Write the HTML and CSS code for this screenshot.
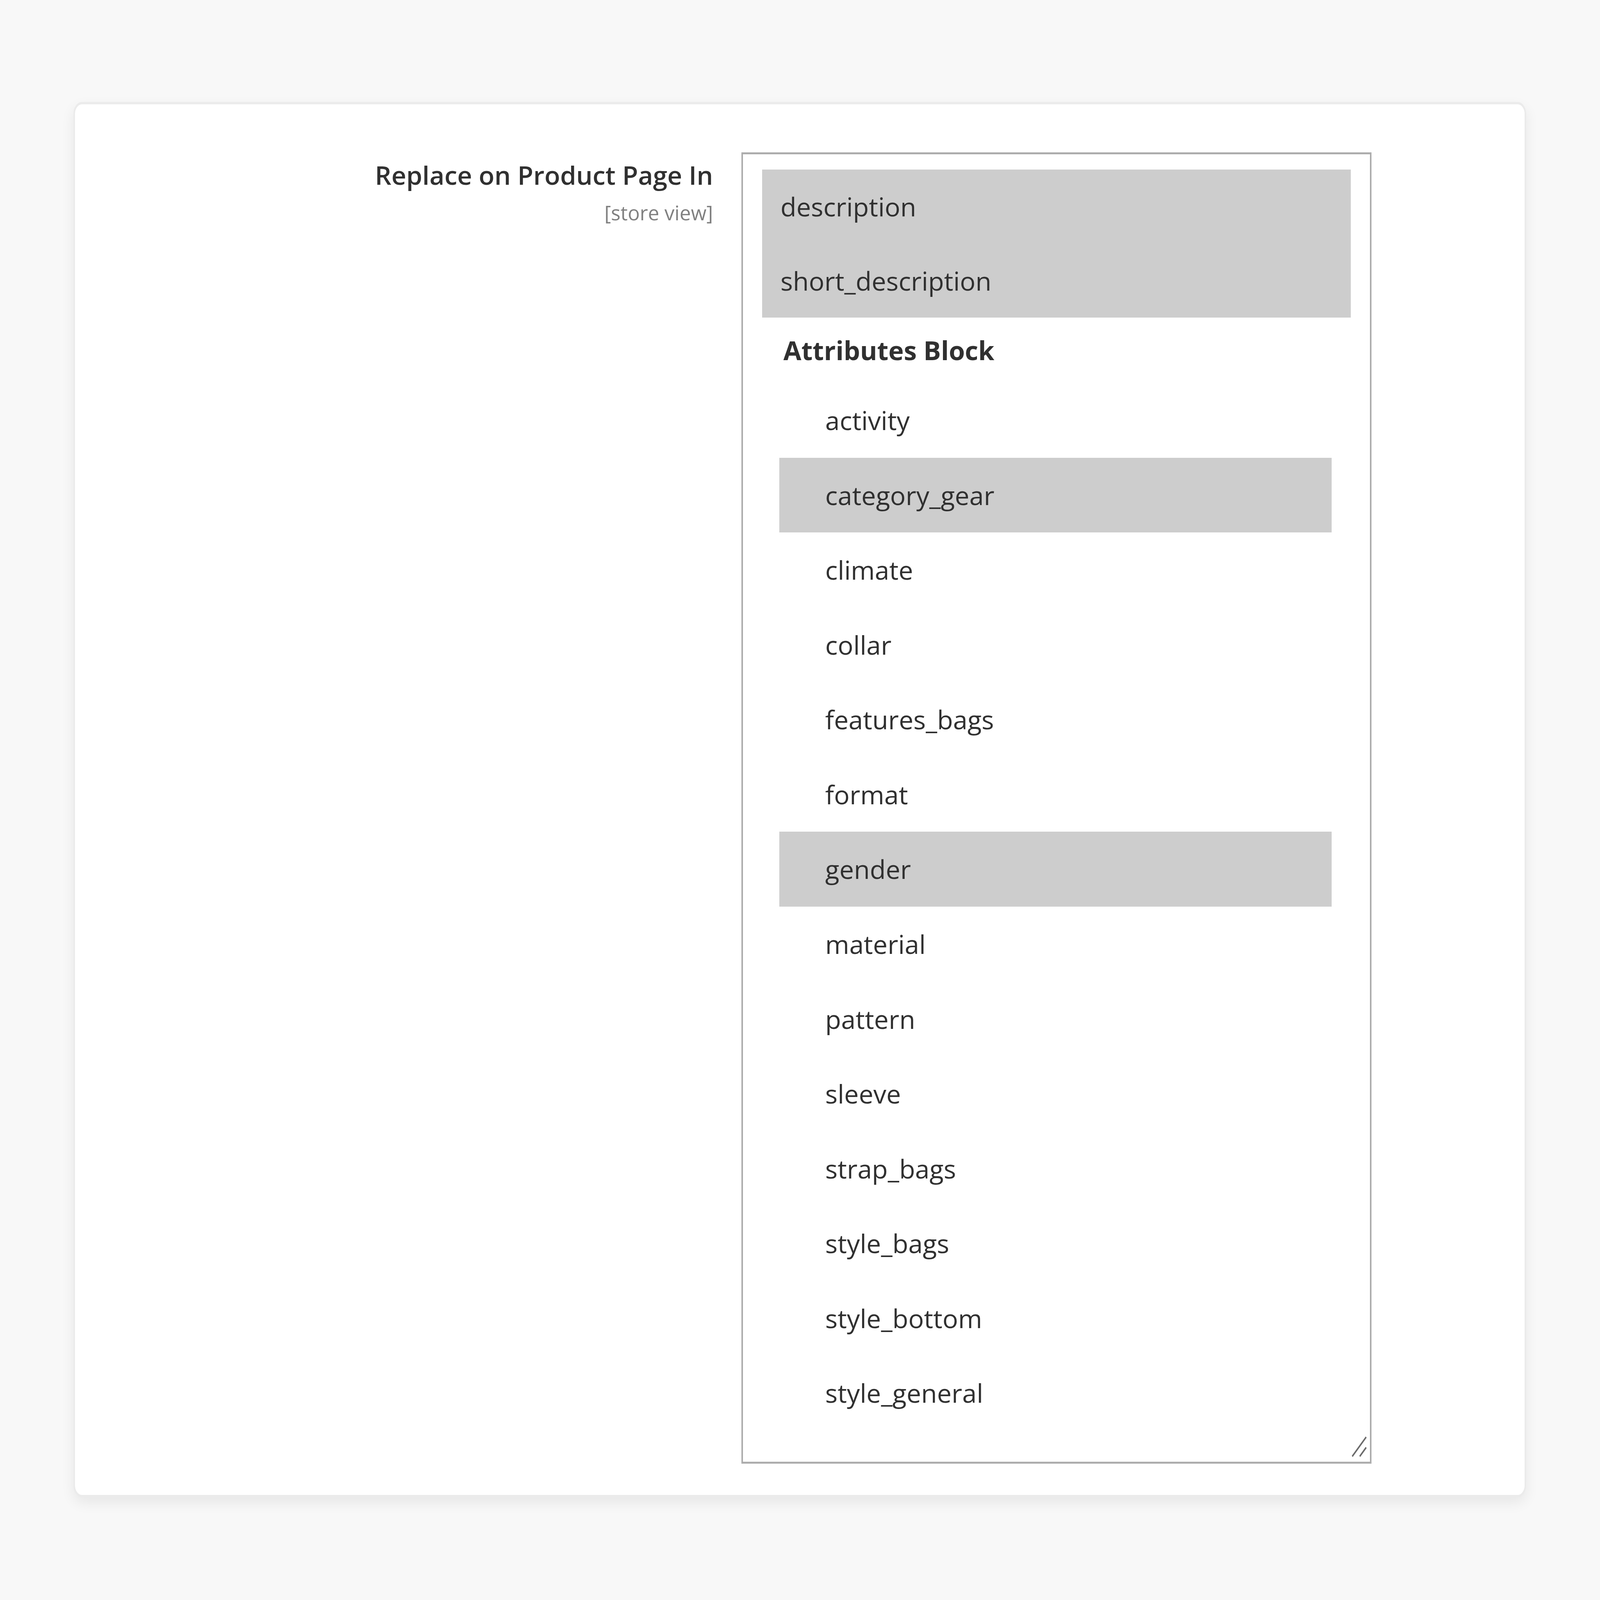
FILE: index.html
```html
<!DOCTYPE html>
<html lang="en">
<head>
    <meta charset="UTF-8">
    <meta name="viewport" content="width=device-width, initial-scale=1.0">
    <title>Replace on Product Page In</title>
    <link rel="stylesheet" href="styles.css">
</head>
<body>
    <div class="card">
        <div class="field-label">
            <span class="label-text">Replace on Product Page In</span>
            <span class="scope">[store view]</span>
        </div>
        <div class="listbox">
            <div class="opt selected">description</div>
            <div class="opt selected">short_description</div>
            <div class="group">
                <div class="group-label">Attributes Block</div>
                <div class="opt nested">activity</div>
                <div class="opt nested selected">category_gear</div>
                <div class="opt nested">climate</div>
                <div class="opt nested">collar</div>
                <div class="opt nested">features_bags</div>
                <div class="opt nested">format</div>
                <div class="opt nested selected">gender</div>
                <div class="opt nested">material</div>
                <div class="opt nested">pattern</div>
                <div class="opt nested">sleeve</div>
                <div class="opt nested">strap_bags</div>
                <div class="opt nested">style_bags</div>
                <div class="opt nested">style_bottom</div>
                <div class="opt nested">style_general</div>
            </div>
            <!-- resize grip -->
            <svg class="grip" viewBox="0 0 70 70" preserveAspectRatio="none">
                <line x1="4" y1="56" x2="56" y2="4" stroke="#6b6b6b" stroke-width="5"/>
                <line x1="32" y1="56" x2="56" y2="32" stroke="#6b6b6b" stroke-width="5"/>
            </svg>
        </div>
    </div>
</body>
</html>
```

FILE: styles.css
```css
/* sized against the viewport: widths in vw, heights in vh */
html, body {
    height: 100%;
}

body {
    font-family: 'Open Sans', 'Liberation Sans', sans-serif;
    background: #f8f8f8;
    color: #303030;
    margin: 0;
    padding: 6.375vh 4.587vw 0;
    box-sizing: border-box;
    overflow: hidden;
}

.card {
    box-sizing: border-box;
    width: 90.81vw;
    background: #fff;
    border-style: solid;
    border-color: #ebebeb;
    border-width: 0.163vh 0.117vw;
    border-radius: 0.536vw / 0.745vh;
    box-shadow: 0 0.33vh 0.84vw rgba(0, 0, 0, 0.07);
    display: flex;
    align-items: flex-start;
    gap: 1.775vw;
    padding: 3vh 0 1.954vh 0;
}

.field-label {
    width: 39.88vw;
    text-align: right;
    display: flex;
    flex-direction: column;
    align-items: flex-end;
}

.label-text {
    font-size: 1.61vw;
    font-weight: 600;
    line-height: 2.676vh;
    margin-top: 0.07vh;
    color: #303030;
}

.scope {
    font-size: 1.256vw;
    line-height: 2.094vh;
    color: #808080;
}

.listbox {
    box-sizing: border-box;
    width: 39.39vw;
    height: 81.95vh;
    border-style: solid;
    border-color: #adadad;
    border-width: 0.14vh 0.1vw;
    padding: 0.954vh 1.205vw 0 1.189vw;
    position: relative;
    font-size: 1.624vw;
}

.opt {
    height: 4.63vh;
    line-height: 4.63vh;
    padding-left: 1.155vw;
    white-space: nowrap;
}

.opt.selected {
    background: #cdcdcd;
}

.group {
    padding: 0 1.205vw 0 1.088vw;
}

.group-label {
    height: 4.072vh;
    line-height: 4.072vh;
    padding-left: 0.251vw;
    font-weight: 700;
}

.opt.nested {
    height: 4.677vh;
    line-height: 4.677vh;
    padding-left: 2.863vw;
}

.grip {
    position: absolute;
    right: 0;
    bottom: 0;
    width: 1.172vw;
    height: 1.629vh;
}
```
